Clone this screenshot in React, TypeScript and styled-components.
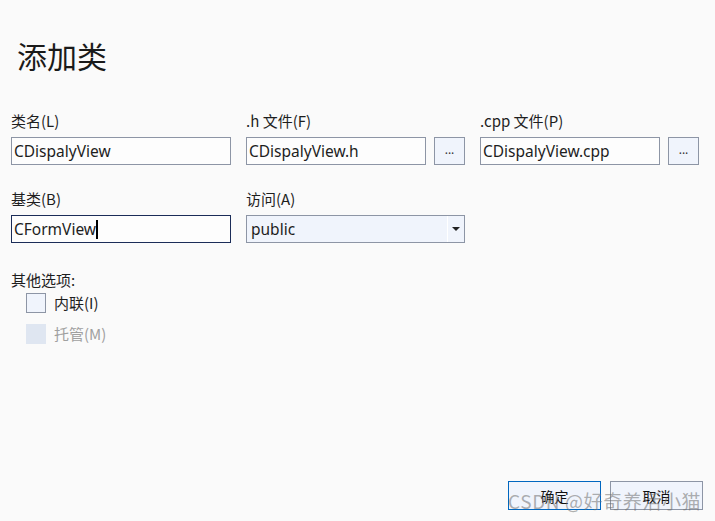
import styled, { createGlobalStyle } from 'styled-components';

const GlobalStyle = createGlobalStyle`
	html, body {
		margin: 0;
		padding: 0;
		background: #fafafa;
	}
	body {
		font-family: "Noto Sans", "Noto Sans CJK SC", sans-serif;
		color: #1e1e1e;
	}
`;

const Page = styled.div`
	box-sizing: border-box;
	height: 521px;
	padding: 0 12px 11px 11px;
	display: flex;
	flex-direction: column;
	position: relative;
`;

const Title = styled.h1`
	margin: 32px 0 0 6px;
	font-family: "Noto Sans CJK SC", sans-serif;
	font-size: 30px;
	font-weight: 400;
	line-height: 46px;
	color: #1a1a1a;
`;

const FieldGrid = styled.div`
	margin-top: 33px;
	display: grid;
	grid-template-columns: 220px 219px 219px;
	column-gap: 15px;
	row-gap: 24px;
`;

const Field = styled.div`
	display: flex;
	flex-direction: column;
	gap: 6px;
`;

const Label = styled.label`
	font-family: "Noto Sans CJK SC", sans-serif;
	font-size: 15px;
	line-height: 20px;
	color: #1e1e1e;
`;

const InputRow = styled.div`
	display: flex;
	gap: 8px;
`;

const TextBox = styled.div<{ $focused?: boolean; $width?: number }>`
	box-sizing: border-box;
	height: 28px;
	width: ${p => (p.$width ? `${p.$width}px` : '100%')};
	border: 1px solid ${p => (p.$focused ? '#1b2c58' : '#8d95a5')};
	background: #fdfdfd;
	padding: 0 2px;
	display: flex;
	align-items: center;
	font-size: 15.5px;
	color: #1e1e1e;
	white-space: nowrap;
`;

const Caret = styled.span`
	display: inline-block;
	width: 2px;
	height: 19px;
	background: #000;
`;

const BrowseButton = styled.button`
	box-sizing: border-box;
	width: 31px;
	height: 28px;
	border: 1px solid #8d95a5;
	background: #f0f4fc;
	padding: 0 0 6px;
	font-family: "Noto Sans", sans-serif;
	font-size: 12px;
	color: #333;
	display: flex;
	align-items: flex-end;
	justify-content: center;
`;

const Select = styled.div`
	box-sizing: border-box;
	height: 28px;
	border: 1px solid #8d95a5;
	background: #f0f4fc;
	display: flex;
	align-items: center;
	font-size: 15.5px;
	color: #1e1e1e;
`;

const SelectValue = styled.span`
	flex: 1;
	padding-left: 4px;
`;

const SelectArrow = styled.span`
	width: 15px;
	height: 100%;
	border-left: 1px solid #ffffff;
	display: flex;
	align-items: center;
	justify-content: center;
	margin-right: 1px;
`;

const OptionsBlock = styled.div`
	margin-top: 27px;
	display: flex;
	flex-direction: column;
`;

const OptionsTitle = styled.div`
	font-family: "Noto Sans CJK SC", sans-serif;
	font-size: 15px;
	line-height: 20px;
	color: #1e1e1e;
`;

const CheckRow = styled.div<{ $disabled?: boolean }>`
	display: flex;
	align-items: center;
	gap: 8px;
	margin-left: 15px;
	margin-top: ${p => (p.$disabled ? '10px' : '2px')};
	font-family: "Noto Sans CJK SC", sans-serif;
	font-size: 15px;
	color: ${p => (p.$disabled ? '#a0a0a0' : '#1e1e1e')};
`;

const Box = styled.span<{ $disabled?: boolean }>`
	box-sizing: border-box;
	width: 20px;
	height: 20px;
	border: 1px solid ${p => (p.$disabled ? '#dfe6f1' : '#8d95a5')};
	background: ${p => (p.$disabled ? '#dfe6f1' : '#f0f4fc')};
`;

const Footer = styled.div`
	margin-top: auto;
	display: flex;
	justify-content: flex-end;
	gap: 9px;
`;

const DialogButton = styled.button<{ $primary?: boolean }>`
	box-sizing: border-box;
	width: 93px;
	height: 29px;
	border: 1px solid ${p => (p.$primary ? '#0067c0' : '#8d95a5')};
	background: #f0f4fc;
	font-family: "Noto Sans CJK SC", sans-serif;
	font-size: 14px;
	color: #111;
	padding: 0;
`;

const Watermark = styled.div`
	position: absolute;
	left: 508px;
	bottom: 7px;
	font-family: "Noto Sans CJK SC", sans-serif;
	font-size: 19px;
	color: rgba(110, 110, 110, 0.55);
	pointer-events: none;
	white-space: nowrap;
	letter-spacing: 0.6px;
`;

const App = () => {
	return (
		<>
			<GlobalStyle />
			<Page>
				<Title>添加类</Title>
				<FieldGrid>
					<Field>
						<Label>类名(L)</Label>
						<TextBox>CDispalyView</TextBox>
					</Field>
					<Field>
						<Label>.h 文件(F)</Label>
						<InputRow>
							<TextBox $width={180}>CDispalyView.h</TextBox>
							<BrowseButton>...</BrowseButton>
						</InputRow>
					</Field>
					<Field>
						<Label>.cpp 文件(P)</Label>
						<InputRow>
							<TextBox $width={180}>CDispalyView.cpp</TextBox>
							<BrowseButton>...</BrowseButton>
						</InputRow>
					</Field>
					<Field>
						<Label>基类(B)</Label>
						<TextBox $focused>
							CFormView<Caret />
						</TextBox>
					</Field>
					<Field>
						<Label>访问(A)</Label>
						<Select>
							<SelectValue>public</SelectValue>
							<SelectArrow>
								<svg width="8" height="4" viewBox="0 0 8 4">
									<path d="M0 0 H8 L4 4 Z" fill="#222" />
								</svg>
							</SelectArrow>
						</Select>
					</Field>
				</FieldGrid>
				<OptionsBlock>
					<OptionsTitle>其他选项:</OptionsTitle>
					<CheckRow>
						<Box />
						<span>内联(I)</span>
					</CheckRow>
					<CheckRow $disabled>
						<Box $disabled />
						<span>托管(M)</span>
					</CheckRow>
				</OptionsBlock>
				<Footer>
					<DialogButton $primary>确定</DialogButton>
					<DialogButton>取消</DialogButton>
				</Footer>
				<Watermark>CSDN @好奇养活小猫</Watermark>
			</Page>
		</>
	);
};

export default App;
